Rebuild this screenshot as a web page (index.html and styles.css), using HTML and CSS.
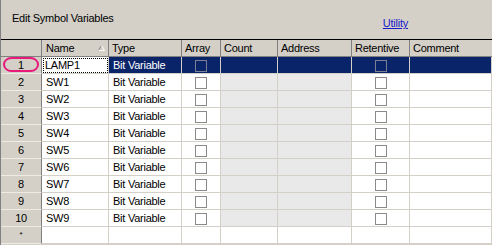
FILE: index.html
```html
<!DOCTYPE html>
<html>
<head>
<meta charset="utf-8">
<link rel="stylesheet" href="styles.css">
</head>
<body>
<div class="panel">
  <div class="topbar">
    <span class="title">Edit Symbol Variables</span>
    <a class="link" href="#">Utility</a>
  </div>
  <div class="grid">
    <div class="row head">
      <div class="corner"></div>
      <div class="hcell sort">Name<svg class="tri" width="7" height="6" viewBox="0 0 7 6"><path d="M0.5 5.5 L3.5 0.5" stroke="#808080" fill="none"/><path d="M3.5 0.5 L6.5 5.5 L0.5 5.5" stroke="#ffffff" fill="none"/></svg></div>
      <div class="hcell">Type</div>
      <div class="hcell">Array</div>
      <div class="hcell">Count</div>
      <div class="hcell">Address</div>
      <div class="hcell">Retentive</div>
      <div class="hcell last">Comment</div>
    </div>
    <div class="row sel">
      <div class="rh"><span class="mark"></span>1</div>
      <div class="cell focus">LAMP1</div>
      <div class="cell">Bit Variable</div>
      <div class="cell ctr"><span class="cb"></span></div>
      <div class="cell"></div>
      <div class="cell"></div>
      <div class="cell ctr"><span class="cb"></span></div>
      <div class="cell"></div>
    </div>
    <div class="row">
      <div class="rh">2</div><div class="cell">SW1</div><div class="cell">Bit Variable</div><div class="cell ctr"><span class="cb"></span></div><div class="cell dim"></div><div class="cell dim"></div><div class="cell ctr"><span class="cb"></span></div><div class="cell"></div>
    </div>
    <div class="row">
      <div class="rh">3</div><div class="cell">SW2</div><div class="cell">Bit Variable</div><div class="cell ctr"><span class="cb"></span></div><div class="cell dim"></div><div class="cell dim"></div><div class="cell ctr"><span class="cb"></span></div><div class="cell"></div>
    </div>
    <div class="row">
      <div class="rh">4</div><div class="cell">SW3</div><div class="cell">Bit Variable</div><div class="cell ctr"><span class="cb"></span></div><div class="cell dim"></div><div class="cell dim"></div><div class="cell ctr"><span class="cb"></span></div><div class="cell"></div>
    </div>
    <div class="row">
      <div class="rh">5</div><div class="cell">SW4</div><div class="cell">Bit Variable</div><div class="cell ctr"><span class="cb"></span></div><div class="cell dim"></div><div class="cell dim"></div><div class="cell ctr"><span class="cb"></span></div><div class="cell"></div>
    </div>
    <div class="row">
      <div class="rh">6</div><div class="cell">SW5</div><div class="cell">Bit Variable</div><div class="cell ctr"><span class="cb"></span></div><div class="cell dim"></div><div class="cell dim"></div><div class="cell ctr"><span class="cb"></span></div><div class="cell"></div>
    </div>
    <div class="row">
      <div class="rh">7</div><div class="cell">SW6</div><div class="cell">Bit Variable</div><div class="cell ctr"><span class="cb"></span></div><div class="cell dim"></div><div class="cell dim"></div><div class="cell ctr"><span class="cb"></span></div><div class="cell"></div>
    </div>
    <div class="row">
      <div class="rh">8</div><div class="cell">SW7</div><div class="cell">Bit Variable</div><div class="cell ctr"><span class="cb"></span></div><div class="cell dim"></div><div class="cell dim"></div><div class="cell ctr"><span class="cb"></span></div><div class="cell"></div>
    </div>
    <div class="row">
      <div class="rh">9</div><div class="cell">SW8</div><div class="cell">Bit Variable</div><div class="cell ctr"><span class="cb"></span></div><div class="cell dim"></div><div class="cell dim"></div><div class="cell ctr"><span class="cb"></span></div><div class="cell"></div>
    </div>
    <div class="row">
      <div class="rh">10</div><div class="cell">SW9</div><div class="cell">Bit Variable</div><div class="cell ctr"><span class="cb"></span></div><div class="cell dim"></div><div class="cell dim"></div><div class="cell ctr"><span class="cb"></span></div><div class="cell"></div>
    </div>
    <div class="row">
      <div class="rh star">*</div><div class="cell"></div><div class="cell"></div><div class="cell"></div><div class="cell"></div><div class="cell"></div><div class="cell"></div><div class="cell"></div>
    </div>
  </div>
</div>
</body>
</html>
```
FILE: styles.css
```css
html, body {
  margin: 0;
  padding: 0;
  background: #d4d0c8;
}
body {
  width: 492px;
  height: 245px;
  overflow: hidden;
  font-family: "Liberation Sans", Arial, sans-serif;
  font-size: 11px;
  letter-spacing: -0.25px;
  color: #000;
}
.panel {
  height: 245px;
  border-left: 1px solid #808080;
  box-sizing: border-box;
  background: #d4d0c8;
}
.topbar {
  display: flex;
  align-items: flex-start;
  height: 40px;
  box-sizing: border-box;
  border-bottom: 1px solid #000;
  padding: 0 84px 0 11px;
}
.title {
  margin-top: 12px;
  line-height: 13px;
}
.link {
  margin-left: auto;
  margin-top: 17px;
  line-height: 13px;
  color: #1a1ac8;
  text-decoration: underline;
}
.row {
  display: grid;
  grid-template-columns: 41px 67px 73px 39px 57px 74px 58px 1fr;
  height: 17px;
}
.row > div {
  box-sizing: border-box;
  height: 17px;
  line-height: 16px;
  white-space: nowrap;
  overflow: hidden;
}
.corner {
  background: #d4d0c8;
  border-right: 1px solid #808080;
  border-bottom: 1px solid #808080;
}
.hcell {
  background: #d4d0c8;
  border-right: 1px solid #808080;
  border-bottom: 1px solid #808080;
  padding-left: 3px;
  line-height: 17px !important;
}
.hcell.last {
  border-right: none;
}
.sort {
  display: flex;
  align-items: center;
  padding-left: 4px;
}
.tri {
  margin-left: auto;
  margin-right: 3px;
  margin-top: -1px;
}
.rh {
  position: relative;
  background: #d4d0c8;
  border-right: 1px solid #808080;
  border-bottom: 1px solid #eeebe4;
  text-align: center;
}
.rh.star {
  font-size: 8px;
  line-height: 15px !important;
}
.mark {
  position: absolute;
  left: 2px;
  top: 0px;
  width: 36px;
  height: 15px;
  box-sizing: border-box;
  border: 2px solid #e8197a;
  border-radius: 9px / 8px;
}
.cell {
  background: #fff;
  border-right: 1px solid #d4d0c8;
  border-bottom: 1px solid #d4d0c8;
  padding-left: 4px;
}
.cell.dim {
  background: #e9e9e9;
}
.cell.ctr {
  display: flex;
  align-items: center;
  justify-content: center;
  padding-left: 0;
  padding-top: 1px;
}
.cb {
  display: block;
  width: 12px;
  height: 12px;
  box-sizing: border-box;
  border: 1px solid #8a8a8a;
  background: #fff;
}
.sel .cell {
  background: #0a246a;
  color: #fff;
}
.sel .cb {
  background: #0a246a;
  border-color: #7a7f95;
}
.sel .cell.focus {
  background: #fff;
  color: #000;
  outline: 1px dotted #000;
  outline-offset: -2px;
  padding-left: 3px;
}
```
